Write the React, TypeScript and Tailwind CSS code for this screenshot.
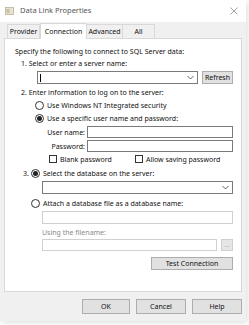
import React from "react";

const F = { fontFamily: "'Noto Sans', 'Open Sans', sans-serif" };

function Radio({ checked }: { checked?: boolean }) {
  return (
    <span className="inline-flex w-[9px] h-[9px] rounded-full border border-[#333] bg-white items-center justify-center shrink-0">
      {checked && <span className="w-[5px] h-[5px] rounded-full bg-[#222]" />}
    </span>
  );
}

function Check() {
  return <span className="inline-block w-[8px] h-[8px] border border-[#333] bg-white shrink-0" />;
}

function Chevron() {
  return (
    <svg width="7" height="5" viewBox="0 0 7 5" className="shrink-0">
      <path d="M0.5 1 L3.5 4 L6.5 1" fill="none" stroke="#555" strokeWidth="0.9" />
    </svg>
  );
}

function Btn({ children, className = "" }: { children: React.ReactNode; className?: string }) {
  return (
    <div className={"flex items-center justify-center bg-[#e1e1e1] border border-[#adadad] text-[#111] " + className}>
      {children}
    </div>
  );
}

export default function App() {
  return (
    <div className="w-[249px] h-[325px] bg-white relative overflow-hidden text-[7px] leading-none text-[#111] whitespace-nowrap" style={F}>
      <div className="w-[246px] flex flex-col shadow-[2px_2px_6px_rgba(0,0,0,0.12)]">
        {/* title bar */}
        <div className="h-[22px] bg-white flex items-center pl-[5px] pr-[8px]">
          <svg width="9" height="8" viewBox="0 0 9 8" className="mr-[6px]">
            <rect x="0.5" y="0.5" width="8" height="7" fill="#e8e4d4" stroke="#b8b098" strokeWidth="0.8" />
            <rect x="1.5" y="2" width="3" height="4" fill="#c9c0a2" />
          </svg>
          <span className="text-[7.5px] text-[#555]">Data Link Properties</span>
          <span className="ml-auto text-[#888]">
            <svg width="8" height="8" viewBox="0 0 8 8">
              <path d="M0.5 0.5 L7.5 7.5 M7.5 0.5 L0.5 7.5" stroke="#999" strokeWidth="0.9" />
            </svg>
          </span>
        </div>
        {/* body */}
        <div className="bg-[#f0f0f0] px-[4px] pb-[4px]">
          {/* tabs */}
          <div className="flex items-end h-[16px] pl-[3px]">
            <div className="h-[14px] w-[33px] justify-center flex items-center border border-b-0 border-[#d9d9d9] bg-[#f0f0f0]">Provider</div>
            <div className="h-[16px] w-[47px] justify-center flex items-center border border-b-0 border-[#d9d9d9] bg-white -mb-px relative z-10">Connection</div>
            <div className="h-[14px] w-[36px] justify-center flex items-center border border-b-0 border-l-0 border-[#d9d9d9] bg-[#f0f0f0]">Advanced</div>
            <div className="h-[14px] w-[32px] justify-center flex items-center border border-b-0 border-l-0 border-[#d9d9d9] bg-[#f0f0f0]">All</div>
          </div>
          {/* panel */}
          <div className="bg-white border border-[#d9d9d9] h-[254px] pl-[10px] pr-[8px] pt-[7px] flex flex-col">
            <div className="h-[11px] flex items-center">Specify the following to connect to SQL Server data:</div>
            <div className="h-[11px] flex items-center pl-[6px] mt-[1px]">1. Select or enter a server name:</div>
            <div className="flex gap-[4px] pl-[22px] mt-[2px]">
              <div className="flex-1 h-[13px] border border-[#7a7a7a] bg-white flex items-center pl-[2px] pr-[3px]">
                <span className="w-px h-[8px] bg-black" />
                <span className="ml-auto"><Chevron /></span>
              </div>
              <Btn className="w-[31px] h-[13px]">Refresh</Btn>
            </div>
            <div className="h-[11px] flex items-center pl-[6px] mt-[3px]">2. Enter information to log on to the server:</div>
            <div className="flex items-center gap-[3px] pl-[20px] mt-[2px] h-[11px]"><Radio /><span>Use Windows NT Integrated security</span></div>
            <div className="flex items-center gap-[3px] pl-[20px] mt-[2px] h-[11px]"><Radio checked /><span>Use a specific user name and password:</span></div>
            <div className="flex items-center mt-[2px]">
              <span className="w-[72px] text-right pr-[2px]">User name:</span>
              <div className="flex-1 h-[12px] border border-[#7a7a7a] bg-white" />
            </div>
            <div className="flex items-center mt-[2px]">
              <span className="w-[72px] text-right pr-[2px]">Password:</span>
              <div className="flex-1 h-[12px] border border-[#7a7a7a] bg-white" />
            </div>
            <div className="flex items-center mt-[2px] h-[10px] pl-[34px]">
              <Check /><span className="ml-[3px]">Blank password</span>
              <span className="ml-[23px]"><Check /></span><span className="ml-[3px]">Allow saving password</span>
            </div>
            <div className="flex items-center mt-[4px] h-[11px] pl-[8px]">
              <span>3.</span>
              <span className="ml-[2px]"><Radio checked /></span>
              <span className="ml-[3px]">Select the database on the server:</span>
            </div>
            <div className="pl-[27px] mt-[2px]">
              <div className="h-[13px] border border-[#7a7a7a] bg-white flex items-center justify-end pr-[3px]"><Chevron /></div>
            </div>
            <div className="flex items-center mt-[4px] h-[11px] pl-[16px]">
              <Radio /><span className="ml-[3px]">Attach a database file as a database name:</span>
            </div>
            <div className="pl-[27px] mt-[2px]">
              <div className="h-[13px] border border-[#d0d0d0] bg-white" />
            </div>
            <div className="pl-[27px] mt-[3px] h-[10px] flex items-center text-[#8a8a8a]">Using the filename:</div>
            <div className="pl-[27px] mt-[2px] flex gap-[4px]">
              <div className="flex-1 h-[12px] border border-[#d0d0d0] bg-white" />
              <div className="w-[12px] h-[12px] border border-[#cfcfcf] bg-[#e6e6e6] flex items-center justify-center text-[#999] text-[6px]">...</div>
            </div>
            <div className="flex justify-end mt-[6px]">
              <Btn className="w-[82px] h-[13px]">Test Connection</Btn>
            </div>
          </div>
          {/* bottom buttons */}
          <div className="flex justify-end gap-[6px] mt-[7px] h-[16px] pr-[0px]">
            <Btn className="w-[48px] h-[15px] border-[#0078d7]">OK</Btn>
            <Btn className="w-[50px] h-[15px]">Cancel</Btn>
            <Btn className="w-[50px] h-[15px]">Help</Btn>
          </div>
          <div className="h-[2px]" />
        </div>
      </div>
    </div>
  );
}
